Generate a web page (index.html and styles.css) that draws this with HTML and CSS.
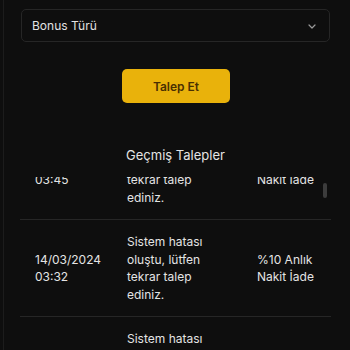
FILE: index.html
```html
<!DOCTYPE html>
<html lang="tr">
<head>
<meta charset="utf-8">
<link rel="stylesheet" href="styles.css">
</head>
<body>
<div class="panel">
  <div class="select">
    <span>Bonus Türü</span>
    <svg class="chev" width="8" height="5" viewBox="0 0 8 5"><path d="M1 1l3 3 3-3" fill="none" stroke="#9a9a9a" stroke-width="1.2" stroke-linecap="round" stroke-linejoin="round"/></svg>
  </div>
  <div class="actions"><button class="btn">Talep Et</button></div>
  <h2 class="title">Geçmiş Talepler</h2>
  <div class="scroller">
    <div class="list">
      <div class="row">
        <div class="c date">14/03/2024<br>03:45</div>
        <div class="c msg">Sistem hatası<br>oluştu, lütfen<br>tekrar talep<br>ediniz.</div>
        <div class="c bonus">%10 Anlık<br>Nakit İade</div>
      </div>
      <div class="row">
        <div class="c date">14/03/2024<br>03:32</div>
        <div class="c msg">Sistem hatası<br>oluştu, lütfen<br>tekrar talep<br>ediniz.</div>
        <div class="c bonus">%10 Anlık<br>Nakit İade</div>
      </div>
      <div class="row">
        <div class="c date">14/03/2024<br>03:20</div>
        <div class="c msg">Sistem hatası<br>oluştu, lütfen<br>tekrar talep<br>ediniz.</div>
        <div class="c bonus">%10 Anlık<br>Nakit İade</div>
      </div>
    </div>
    <div class="thumb"></div>
  </div>
</div>
</body>
</html>
```
FILE: styles.css
```css
html, body { margin: 0; padding: 0; background: #0e0e0e; }
body { font-family: Inter, "Noto Sans", sans-serif; color: #e6e6e6; height: 350px; overflow: hidden; }
.panel {
  margin-left: 3px;
  border-left: 1px solid #1c1c1c;
  padding: 9px 20px 0 17px;
  height: 341px;
}
.select {
  box-sizing: border-box;
  height: 33px;
  border: 1px solid #262626;
  border-radius: 5px;
  display: flex;
  align-items: center;
  justify-content: space-between;
  padding: 0 13px 0 10px;
  font-size: 12px;
  color: #e2e2e2;
}
.chev { margin-top: 1px; }
.actions { display: flex; justify-content: center; margin-top: 27px; padding-left: 1px; }
.btn {
  width: 108px; height: 34px;
  border: 0; border-radius: 5px;
  background: #e9b20b;
  color: #4a2f02;
  font-family: Inter, sans-serif;
  font-size: 12px; font-weight: 600;
}
.title {
  margin: 42px 0 0;
  text-align: center;
  font-size: 13px; font-weight: 400;
  line-height: 20px;
  color: #e4e4e4;
}
.scroller {
  position: relative;
  margin-top: 12px;
  height: 173px;
  overflow: hidden;
  margin-left: -1px;
  margin-right: -1px;
}
.list { margin-top: -54px; }
.row {
  display: grid;
  grid-template-columns: 92px 130px 1fr;
  align-items: center;
  padding: 13px 4px 13px 15px;
  border-bottom: 1px solid #262626;
  font-size: 12px;
  line-height: 17.5px;
  color: #e4e4e4;
}
.thumb {
  position: absolute;
  left: 303px; top: 6px;
  width: 4px; height: 15px;
  border-radius: 2px;
  background: #3c3c3c;
}
```
